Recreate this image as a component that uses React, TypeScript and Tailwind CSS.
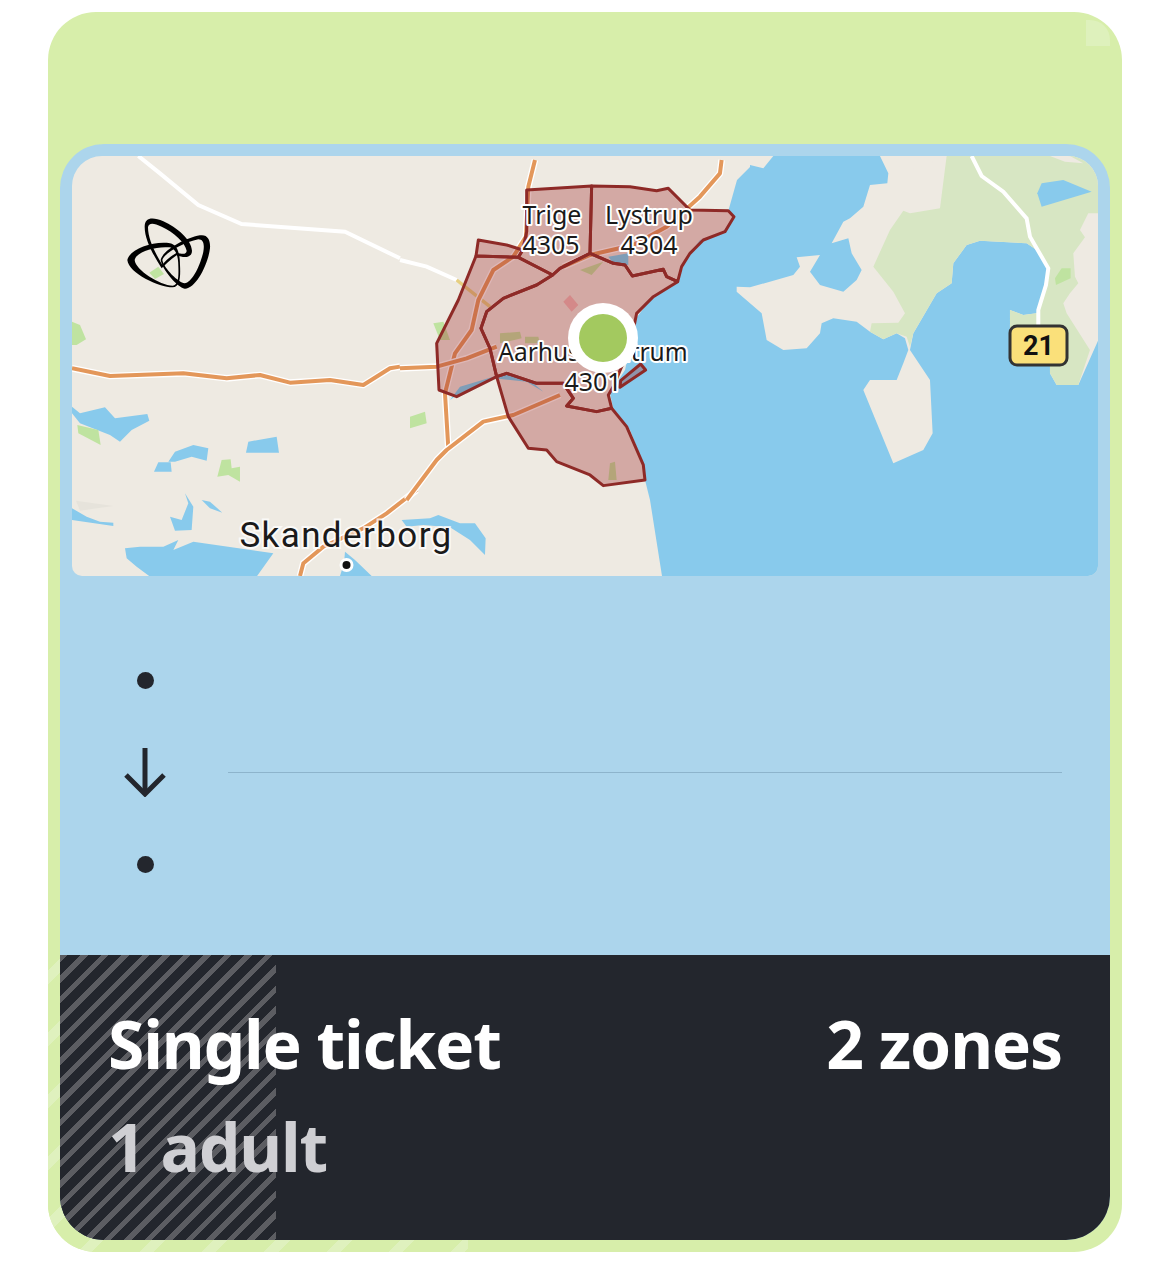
const LAND = "#EEEAE2";
const WATER = "#88CAEC";
const GREEN = "#BFE3A0";
const FOREST = "#D7E6C3";
const RIVER = "#6DD7FF";

// Zones traced from the map, in a 3x grid with origin at 400,160
const zones = [
  "380,90 575,78 570,280 520,305 480,325 458,345 355,292 368,270 380,215",
  "235,240 320,255 368,270 355,292 228,288",
  "575,78 690,80 770,92 805,85 870,150 985,152 1002,170 975,215 910,240 870,280 845,320 833,365 800,350 790,328 697,348 675,315 640,310 570,280",
  "228,288 355,292 458,345 410,375 310,415 260,455 243,505 270,565 290,650 170,710 117,690 110,550 175,420",
  "458,345 480,325 570,280 640,310 675,315 697,348 790,328 800,350 833,365 760,410 710,460 690,560 640,680 625,705 635,745 590,755 500,738 520,715 490,670 410,670 320,640 290,650 270,565 243,505 260,455 310,415 410,375",
  "290,650 320,640 410,670 490,670 520,715 500,738 590,755 635,745 680,800 730,915 735,960 610,977 570,945 470,905 440,870 385,865 325,770",
  "660,682 737,630 722,612 662,662",
];

const lakes = [
  "36,770 60,790 135,772 165,805 262,792 268,812 215,840 180,875 150,855 60,820 36,790",
  "325,935 345,905 400,885 445,895 440,932 395,920 345,935",
  "282,965 295,937 332,937 335,965",
  "558,908 565,875 650,860 657,908",
  "375,1030 400,1070 395,1140 345,1142 330,1100 365,1110 385,1060",
  "425,1050 450,1055 487,1088 450,1075",
  "36,1075 80,1100 120,1115 160,1118 160,1128 36,1110",
  "195,1195 240,1190 310,1190 355,1170 340,1200 400,1175 640,1210 590,1280 270,1280 230,1250 200,1225",
];

const westGreens = [
  "52,825 115,840 122,885 55,850",
  "36,515 60,525 78,568 50,585 36,585",
  "472,980 485,930 512,928 515,955 540,950 540,995 505,975",
  "268,368 295,350 312,372 285,387",
];

const roads = [
  "405,0 385,80 378,230 340,290 280,330 235,420 215,510 165,580 135,700 145,865",
  "0,625 110,620 200,595 290,560",
  "20,1020 110,900 140,870 250,785 340,765 480,705",
  "965,0 960,40 900,110 800,200 700,255 570,285 490,320",
];

function Road({ points }: { points: string }) {
  return (
    <>
      <polyline points={points} fill="none" stroke="#ffffff" strokeWidth="20" strokeLinejoin="round" />
      <polyline points={points} fill="none" stroke="#E3975A" strokeWidth="12" strokeLinejoin="round" />
    </>
  );
}

function Label({ x, y, size, children }: { x: number; y: number; size: number; children: string }) {
  return (
    <text
      x={x}
      y={y}
      textAnchor="middle"
      fontSize={size}
      fill="#1a1a1a"
      stroke="#ffffff"
      strokeWidth="4"
      strokeLinejoin="round"
      paintOrder="stroke"
      fontFamily="'Noto Sans', sans-serif"
    >
      {children}
    </text>
  );
}

function MapDrawing() {
  return (
    <svg viewBox="72 156 1026 420" className="block w-full h-full">
      <rect x="72" y="156" width="1026" height="420" fill={LAND} />

      {/* West side: lakes, fields and the long roads */}
      <g transform="translate(60 150) scale(0.3333)">
        {lakes.map((p) => (
          <polygon key={p} points={p} fill={WATER} />
        ))}
        {westGreens.map((p) => (
          <polygon key={p} points={p} fill={GREEN} />
        ))}
        <polygon points="48,1052 160,1068 60,1082" fill="#E6E3DB" />
        <polyline
          points="235,18 300,70 415,165 545,222 855,245 1020,325"
          fill="none"
          stroke="#ffffff"
          strokeWidth="12"
        />
        <Road points="36,655 150,678 370,670 500,685 600,675 690,698 810,690 910,705 990,655 1020,650" />
      </g>

      {/* Skanderborg surroundings */}
      <g transform="translate(230 490) scale(0.3333)">
        <polygon points="515,90 600,85 625,75 690,100 735,100 767,145 765,195 720,150 660,112 580,105 530,110" fill={WATER} />
        <polygon points="345,185 375,210 425,258 330,258 342,220" fill={WATER} />
        <polyline points="560,0 470,70 400,115 280,170 220,220 210,258" fill="none" stroke="#ffffff" strokeWidth="20" />
        <polyline points="560,0 470,70 400,115 280,170 220,220 210,258" fill="none" stroke="#E3975A" strokeWidth="12" />
      </g>

      {/* Sea */}
      <polygon
        points="662,576 650,500 645,480 643,463 630,430 613,408 610,393 625,370 637,317 650,300 677,283 687,257 700,240 723,232 733,217 728,212 737,180 750,167 750,156 1098,156 1098,576"
        fill={WATER}
      />

      {/* East side land, in a 3x grid with origin at 750,150 */}
      <g transform="translate(750 150) scale(0.3333)">
        <polygon points="0,18 70,18 40,55 0,45" fill={LAND} />
        <polygon
          points="390,18 1045,18 1045,570 985,705 920,705 900,670 900,640 780,560 780,480 820,495 860,490 870,470 895,350 860,300 830,280 690,272 650,285 610,340 605,400 560,430 490,550 480,600 540,690 548,850 520,900 430,940 340,720 360,690 440,690 460,640 475,600 465,565 440,550 400,568 360,545 320,515 250,505 215,520 210,550 170,595 100,600 50,570 35,490 -40,425 -40,410 0,412 130,375 150,350 140,322 210,315 180,365 210,405 280,425 320,390 335,360 305,310 295,265 245,280 280,215 300,205 340,170 360,105 412,100 415,70"
          fill={LAND}
        />
        <polygon
          points="590,18 665,18 1045,18 1045,190 1015,190 990,240 1005,262 970,310 975,380 985,400 960,430 940,460 950,490 1020,600 985,705 920,705 900,670 900,640 780,560 780,480 820,495 860,490 870,470 895,350 860,300 830,280 690,272 650,285 610,340 605,400 560,430 490,550 480,590 470,560 440,550 400,568 360,545 365,520 445,518 465,490 430,425 370,350 420,240 460,182 480,190 570,175"
          fill={FOREST}
        />
        <polygon points="430,18 590,18 570,28 460,68" fill={LAND} />
        <polygon points="900,18 960,18 1000,40 945,35" fill={LAND} />
        <polygon points="875,100 940,90 1025,125 875,170 862,130" fill={WATER} />
        <polygon points="915,385 935,355 962,355 962,385 918,405" fill={GREEN} />
        <polyline
          points="665,18 695,78 760,125 830,205 840,260 895,355 888,405 865,480 865,530"
          fill="none"
          stroke="#ffffff"
          strokeWidth="12"
        />
      </g>

      {/* Aarhus area, in a 3x grid with origin at 400,160 */}
      <g transform="translate(400 160) scale(0.3333)">
        <polygon points="100,490 130,485 150,540 120,540" fill={GREEN} />
        <polygon points="30,770 75,755 80,790 30,805" fill={GREEN} />
        <polyline points="0,300 80,320 170,360" fill="none" stroke="#ffffff" strokeWidth="12" />
        <polyline points="170,360 270,440" fill="none" stroke="#E6CF80" strokeWidth="10" />
        {roads.map((r) => (
          <Road key={r} points={r} />
        ))}
        <polygon points="150,720 170,705 280,655 380,665 430,695 400,670 310,640 280,650 180,680" fill={RIVER} />
        <polygon points="625,290 685,280 685,315 640,310" fill={RIVER} />
        <polygon points="540,330 610,305 575,345" fill={GREEN} />
        <polygon points="300,520 360,515 365,535 300,550" fill={GREEN} />
        <polygon points="375,530 415,530 420,550 375,550" fill={GREEN} />
        <polygon points="630,910 645,905 650,960 625,960" fill={GREEN} />
        <polygon points="510,405 535,435 515,455 490,425" fill="#F0B8B8" />
        {zones.map((z) => (
          <polygon key={z} points={z} fill="#A03030" fillOpacity="0.35" stroke="#8E2A27" strokeWidth="9" strokeLinejoin="round" />
        ))}
      </g>

      <Label x={552} y={224} size={25}>Trige</Label>
      <Label x={551} y={254} size={25}>4305</Label>
      <Label x={649} y={224} size={25}>Lystrup</Label>
      <Label x={649} y={254} size={25}>4304</Label>
      <Label x={593} y={361} size={24.5}>Aarhus Centrum</Label>

      {/* Position pin */}
      <circle cx="603" cy="338" r="35" fill="#ffffff" />
      <circle cx="603" cy="338" r="24" fill="#A3C95F" />

      <Label x={593} y={391} size={25}>4301</Label>

      <text
        x="346"
        y="547"
        textAnchor="middle"
        fontSize="35"
        letterSpacing="1.4"
        fill="#1a1a1a"
        stroke="#ffffff"
        strokeOpacity="0.75"
        strokeWidth="4"
        paintOrder="stroke"
        fontFamily="Roboto, sans-serif"
      >
        Skanderborg
      </text>
      <circle cx="346.5" cy="565" r="7" fill="#ffffff" />
      <circle cx="346.5" cy="565" r="4" fill="#111111" />

      {/* Road shield */}
      <rect x="1010" y="326" width="57" height="39" rx="7" fill="#FAE07A" stroke="#333333" strokeWidth="3" />
      <text x="1038.5" y="355" textAnchor="middle" fontSize="27" fontWeight="700" fill="#111111" fontFamily="Roboto, sans-serif">
        21
      </text>

      {/* Company logo, in a 3x grid with origin at 120,210 */}
      <g transform="translate(120 210) scale(0.3333)" fill="#000000" fillRule="evenodd">
        <path d="M74 50 C74 22 98 20 130 34 C170 52 214 88 216 122 C216 142 196 146 170 136 C150 150 135 165 125 175 C100 135 74 90 74 50Z M84 52 C86 38 100 38 125 50 C160 66 196 98 200 122 C200 132 190 134 170 128 C150 140 135 152 127 165 C106 130 84 88 84 52Z" />
        <path d="M22 150 C28 118 100 92 150 100 C172 104 180 130 180 165 C182 200 180 232 158 232 C118 232 26 190 22 150Z M44 150 C48 126 105 108 148 112 C166 115 175 135 175 168 C176 198 176 226 158 227 C120 226 46 180 44 150Z" />
        <path d="M122 150 C128 122 190 86 240 76 C264 72 272 92 270 115 C264 165 226 238 194 236 C172 232 126 178 122 150Z M127 150 C134 128 190 98 235 88 C250 88 254 102 250 125 C240 170 215 218 194 220 C176 218 132 176 127 150Z" />
      </g>
    </svg>
  );
}

export default function App() {
  return (
    <div className="min-h-[1270px] bg-white pt-3 px-12 font-['Noto_Sans',sans-serif]">
      <div className="relative h-[1240px] w-[1074px] overflow-hidden rounded-[48px] bg-[#D7EEAA] pt-[132px] px-3">
        {/* Faint reflections on the card */}
        <div className="absolute right-[12px] top-[8px] h-[26px] w-[24px] rounded-tr-[20px] bg-[#DEF1BC]"></div>
        <div className="absolute bottom-0 left-0 h-[330px] w-[420px] bg-[repeating-linear-gradient(135deg,#D7EEAA_0px,#D7EEAA_34px,#DFF1BE_34px,#DFF1BE_44px)]"></div>

        <div className="relative h-[1096px] w-[1050px] overflow-hidden rounded-[44px] bg-[#ACD5EC]">
          <div className="px-3 pt-3">
            <div className="h-[420px] w-[1026px] overflow-hidden rounded-t-[30px] rounded-b-[10px]">
              <MapDrawing />
            </div>
          </div>

          {/* Route */}
          <div className="flex h-[379px] items-center pl-[65px] pr-12 pt-[13px]">
            <div className="flex w-10 flex-col items-center">
              <div className="flex h-[92px] items-center">
                <div className="h-[17px] w-[17px] rounded-full bg-[#23262D]"></div>
              </div>
              <div className="flex h-[92px] items-center">
                <svg width="42" height="50" viewBox="0 0 42 50" fill="none" stroke="#23262D" strokeWidth="5">
                  <path d="M21 1V47" />
                  <path d="M2 28L21 47L40 28" />
                </svg>
              </div>
              <div className="flex h-[92px] items-center">
                <div className="h-[17px] w-[17px] rounded-full bg-[#23262D]"></div>
              </div>
            </div>
            <div className="ml-[63px] h-px flex-1 bg-[#8DB4CC]"></div>
          </div>

          {/* Ticket summary */}
          <div className="relative h-[285px] bg-[#23262D]">
            <div className="absolute inset-y-0 left-0 w-[216px] bg-[repeating-linear-gradient(135deg,#5C5D62_0px,#5C5D62_5.5px,#23262D_5.5px,#23262D_14.5px)]"></div>
            <div className="relative flex items-start justify-between pl-12 pr-12 pt-[46px]">
              <div className="flex flex-col">
                <span className="text-[66px] font-bold leading-[84px] tracking-[-1.2px] text-white">Single ticket</span>
                <span className="mt-[19px] text-[66px] font-bold leading-[84px] tracking-[-1.2px] text-[#CFCFD3]">1 adult</span>
              </div>
              <span className="text-[66px] font-bold leading-[84px] tracking-[-1.2px] text-white">2 zones</span>
            </div>
          </div>
        </div>
      </div>
    </div>
  );
}
